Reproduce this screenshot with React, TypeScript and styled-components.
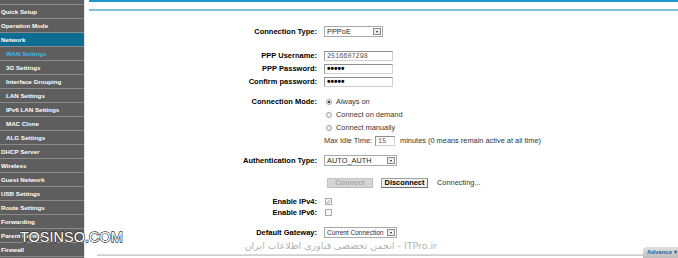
import styled, { createGlobalStyle } from "styled-components";

const GlobalStyle = createGlobalStyle`
	html, body {
		margin: 0;
		padding: 0;
		background: #fff;
		overflow: hidden;
	}
	body {
		font-family: "Liberation Sans", Arial, sans-serif;
	}
`;

const Page = styled.div`
	position: relative;
	display: flex;
	width: 678px;
	height: 258px;
	overflow: hidden;
	background: #fff;
`;

const Sidebar = styled.nav`
	width: 84px;
	flex: none;
	background: #5e5e5e;
	border-right: 1px solid #e4e4e4;
	display: flex;
	flex-direction: column;
`;

const MenuStub = styled.div`
	height: 4px;
	border-bottom: 1px solid #8a8a8a;
`;

const MenuItem = styled.div<{ $sub?: boolean; $active?: boolean; $current?: boolean }>`
	height: 13px;
	line-height: 13px;
	border-bottom: 1px solid #8a8a8a;
	padding-left: ${(p) => (p.$sub ? 6 : 1)}px;
	background: ${(p) => (p.$active ? "#0f6d94" : "transparent")};
	color: ${(p) => (p.$current ? "#3fb9e8" : "#fff")};
	font-size: 6.2px;
	font-weight: 700;
	white-space: nowrap;
	overflow: hidden;
`;

const Main = styled.main`
	flex: 1;
	min-width: 0;
	display: flex;
	flex-direction: column;
`;

const TopRule = styled.div`
	margin-left: 4px;
	height: 2px;
	background: #1b98cc;
`;

const SubRule = styled.div`
	margin: 7px 0 0 4px;
	height: 2px;
	background: #7cc2d9;
`;

const Form = styled.div`
	display: flex;
	flex-direction: column;
	padding-top: 14px;
`;

const Row = styled.div<{ $gap?: number }>`
	display: grid;
	grid-template-columns: 232px 1fr;
	column-gap: 7px;
	align-items: start;
	margin-top: ${(p) => p.$gap ?? 0}px;
`;

const Label = styled.div<{ $h?: number }>`
	text-align: right;
	font-size: 7.5px;
	font-weight: 700;
	color: #000;
	line-height: ${(p) => p.$h ?? 13}px;
	white-space: nowrap;
`;

const Stack = styled.div`
	display: flex;
	flex-direction: column;
`;

const Field = styled.div<{ $h?: number }>`
	display: flex;
	align-items: center;
	height: ${(p) => p.$h ?? 13}px;
	font-size: 7.4px;
	color: #333;
	white-space: nowrap;
`;

const SelectBox = styled.div<{ $w: number; $small?: boolean }>`
	display: flex;
	align-items: center;
	box-sizing: border-box;
	width: ${(p) => p.$w}px;
	height: 11px;
	border: 1px solid #a9a9a9;
	padding-left: 2px;
	background: #fff;
	font-size: ${(p) => (p.$small ? 6.5 : 7.4)}px;
	color: #2a2a2a;
`;

const SelectArrow = styled.span`
	margin-left: auto;
	margin-right: 1px;
	width: 8px;
	height: 7px;
	flex: none;
	box-sizing: border-box;
	border: 1px solid #8a8a8a;
	background: #eeeeee;
	display: flex;
	align-items: center;
	justify-content: center;

	&::after {
		content: "";
		border-left: 1.5px solid transparent;
		border-right: 1.5px solid transparent;
		border-top: 2px solid #222;
	}
`;

const TextBox = styled.div<{ $w: number }>`
	display: flex;
	align-items: center;
	box-sizing: border-box;
	width: ${(p) => p.$w}px;
	height: 10px;
	padding-left: 2px;
	border: 1px solid #d0d0d0;
	border-top-color: #8e8e8e;
	border-left-color: #9a9a9a;
	background: #fff;
`;

const MonoValue = styled.span`
	font-family: "Liberation Mono", "Courier New", monospace;
	font-size: 6.8px;
	color: #555;
`;

const Dots = styled.span`
	font-size: 10px;
	font-weight: 700;
	color: #000;
	line-height: 8px;
`;

const Radio = styled.span<{ $checked?: boolean }>`
	width: 4px;
	height: 4px;
	margin: 0 4px 0 2px;
	border-radius: 50%;
	border: 1px solid #a0a0a0;
	background: ${(p) =>
		p.$checked
			? "radial-gradient(circle, #2c3e63 0 1.2px, #eef0f4 1.6px)"
			: "#f2f2f2"};
`;

const Check = styled.span`
	display: flex;
	align-items: center;
	justify-content: center;
	box-sizing: border-box;
	width: 7px;
	height: 7px;
	margin-left: 1px;
	border: 1px solid #a8a8a8;
	background: #f7f7f7;
	font-size: 6px;
	color: #6b68a8;
	line-height: 1;
`;

const Spacer = styled.span<{ $w: number }>`
	display: inline-block;
	width: ${(p) => p.$w}px;
	flex: none;
`;

const Button = styled.span<{ $disabled?: boolean; $w: number }>`
	display: flex;
	align-items: center;
	justify-content: center;
	box-sizing: border-box;
	width: ${(p) => p.$w}px;
	height: 10px;
	font-size: 7.4px;
	font-weight: 700;
	color: ${(p) => (p.$disabled ? "#a9a9a9" : "#000")};
	background: ${(p) => (p.$disabled ? "#d5d5d5" : "#f1f1f1")};
	border: 1px solid ${(p) => (p.$disabled ? "#c6c6c6" : "#a0a0a0")};
	border-right-color: ${(p) => (p.$disabled ? "#bdbdbd" : "#6f6f6f")};
	border-bottom-color: ${(p) => (p.$disabled ? "#bdbdbd" : "#6f6f6f")};
`;

const Footer = styled.div`
	margin-top: auto;
	display: flex;
	align-items: flex-end;
	height: 11px;
	padding-left: 12px;
`;

const FooterRule = styled.div`
	flex: 1;
	height: 2px;
	margin-bottom: 2px;
	background: linear-gradient(#e2e2e2, #c9c9c9);
`;

const AdvanceTab = styled.div`
	width: 35px;
	height: 11px;
	flex: none;
	box-sizing: border-box;
	padding-left: 4px;
	border-radius: 4px 0 0 0;
	background: linear-gradient(#e0e0e0, #bdbdbd);
	font-size: 6px;
	font-weight: 700;
	line-height: 11px;
	color: #2463a6;
	white-space: nowrap;
`;

const SiteMark = styled.div`
	position: absolute;
	left: 20px;
	top: 230px;
	font-size: 14.5px;
	line-height: 1;
	color: #fff;
	-webkit-text-stroke: 1.3px #333;
	paint-order: stroke fill;
	white-space: nowrap;
`;

const ForumMark = styled.div`
	position: absolute;
	left: 243px;
	top: 241px;
	width: 194px;
	direction: rtl;
	font-family: "DejaVu Sans", sans-serif;
	font-size: 9.5px;
	line-height: 10px;
	color: #b3b3b3;
	white-space: nowrap;
`;

const menu = [
	{ label: "Quick Setup" },
	{ label: "Operation Mode" },
	{ label: "Network", active: true },
	{ label: "WAN Settings", sub: true, current: true },
	{ label: "3G Settings", sub: true },
	{ label: "Interface Grouping", sub: true },
	{ label: "LAN Settings", sub: true },
	{ label: "IPv6 LAN Settings", sub: true },
	{ label: "MAC Clone", sub: true },
	{ label: "ALG Settings", sub: true },
	{ label: "DHCP Server" },
	{ label: "Wireless" },
	{ label: "Guest Network" },
	{ label: "USB Settings" },
	{ label: "Route Settings" },
	{ label: "Forwarding" },
	{ label: "Parent Control" },
	{ label: "Firewall" },
];

export default function App() {
	return (
		<>
			<GlobalStyle />
			<Page>
				<Sidebar>
					<MenuStub />
					{menu.map((m) => (
						<MenuItem key={m.label} $sub={m.sub} $active={m.active} $current={m.current}>
							{m.label}
						</MenuItem>
					))}
				</Sidebar>

				<Main>
					<TopRule />
					<SubRule />

					<Form>
						<Row>
							<Label>Connection Type:</Label>
							<Field>
								<SelectBox $w={59}>
									PPPoE
									<SelectArrow />
								</SelectBox>
							</Field>
						</Row>

						<Row $gap={11}>
							<Label>PPP Username:</Label>
							<Field>
								<TextBox $w={69}>
									<MonoValue>2516607298</MonoValue>
								</TextBox>
							</Field>
						</Row>
						<Row>
							<Label>PPP Password:</Label>
							<Field>
								<TextBox $w={69}>
									<Dots>•••••</Dots>
								</TextBox>
							</Field>
						</Row>
						<Row>
							<Label>Confirm password:</Label>
							<Field>
								<TextBox $w={69}>
									<Dots>•••••</Dots>
								</TextBox>
							</Field>
						</Row>

						<Row $gap={7}>
							<Label>Connection Mode:</Label>
							<Stack>
								<Field>
									<Radio $checked />
									Always on
								</Field>
								<Field>
									<Radio />
									Connect on demand
								</Field>
								<Field>
									<Radio />
									Connect manually
								</Field>
								<Field>
									Max Idle Time:
									<Spacer $w={3} />
									<TextBox $w={20}>
										<MonoValue>15</MonoValue>
									</TextBox>
									<Spacer $w={5} />
									minutes (0 means remain active at all time)
								</Field>
							</Stack>
						</Row>

						<Row $gap={7}>
							<Label>Authentication Type:</Label>
							<Field>
								<SelectBox $w={73}>
									AUTO_AUTH
									<SelectArrow />
								</SelectBox>
							</Field>
						</Row>

						<Row $gap={9}>
							<Label />
							<Field>
								<Spacer $w={3} />
								<Button $disabled $w={46}>
									Connect
								</Button>
								<Spacer $w={8} />
								<Button $w={47}>Disconnect</Button>
								<Spacer $w={9} />
								Connecting...
							</Field>
						</Row>

						<Row $gap={7}>
							<Label $h={11}>Enable IPv4:</Label>
							<Field $h={11}>
								<Check>✓</Check>
							</Field>
						</Row>
						<Row>
							<Label $h={11}>Enable IPv6:</Label>
							<Field $h={11}>
								<Check />
							</Field>
						</Row>

						<Row $gap={8}>
							<Label>Default Gateway:</Label>
							<Field>
								<SelectBox $w={73} $small>
									Current Connection
									<SelectArrow />
								</SelectBox>
							</Field>
						</Row>
					</Form>

					<Footer>
						<FooterRule />
						<AdvanceTab>Advance ▾</AdvanceTab>
					</Footer>
				</Main>

				<SiteMark>TOSINSO.COM</SiteMark>
				<ForumMark>ITPro.ir - انجمن تخصصی فناوری اطلاعات ایران</ForumMark>
			</Page>
		</>
	);
}
